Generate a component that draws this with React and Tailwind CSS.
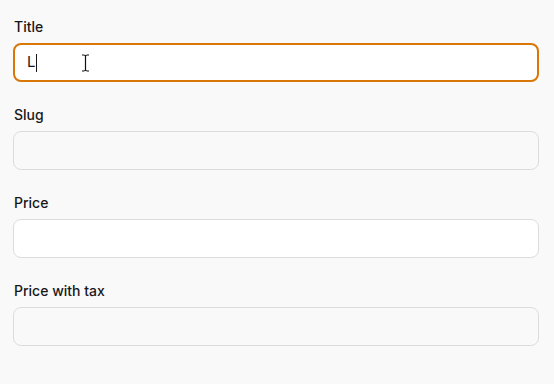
export default function App() {
  const fields = [
    { label: 'Title', value: 'L', focused: true, muted: false },
    { label: 'Slug', value: '', focused: false, muted: true },
    { label: 'Price', value: '', focused: false, muted: false },
    { label: 'Price with tax', value: '', focused: false, muted: true },
  ];

  return (
    <div
      className="min-h-[384px] bg-[#f9f9f9] pl-[13px] pr-[15px] pt-[17px]"
      style={{ fontFamily: 'Inter, "Noto Sans", sans-serif' }}
    >
      <div className="flex flex-col gap-[23px]">
        {fields.map((f) => (
          <div key={f.label} className="flex flex-col gap-1.5">
            <label className="pl-px text-sm leading-5 font-medium text-[#18181b]">
              {f.label}
            </label>
            {f.focused ? (
              <div className="relative flex h-[39px] items-center rounded-lg border-2 border-[#d97706] bg-white px-3">
                <span className="text-[15px] text-[#18181b]">{f.value}</span>
                <span className="ml-px h-[18px] w-px bg-[#18181b]" />
                {/* mouse I-beam cursor */}
                <svg
                  className="absolute left-[66px] top-[9px]"
                  width="9"
                  height="18"
                  viewBox="0 0 9 18"
                >
                  <path
                    d="M1 1h2.5M5.5 1H8M4.5 2v14M1 17h2.5M5.5 17H8M3.5 1.5h2M3.5 16.5h2"
                    stroke="#111"
                    strokeWidth="1.2"
                    fill="none"
                  />
                </svg>
              </div>
            ) : (
              <div
                className={`h-[39px] rounded-lg border border-[#dcdcdc] ${
                  f.muted ? 'bg-[#f9f9f9]' : 'bg-white'
                }`}
              />
            )}
          </div>
        ))}
      </div>
    </div>
  );
}
